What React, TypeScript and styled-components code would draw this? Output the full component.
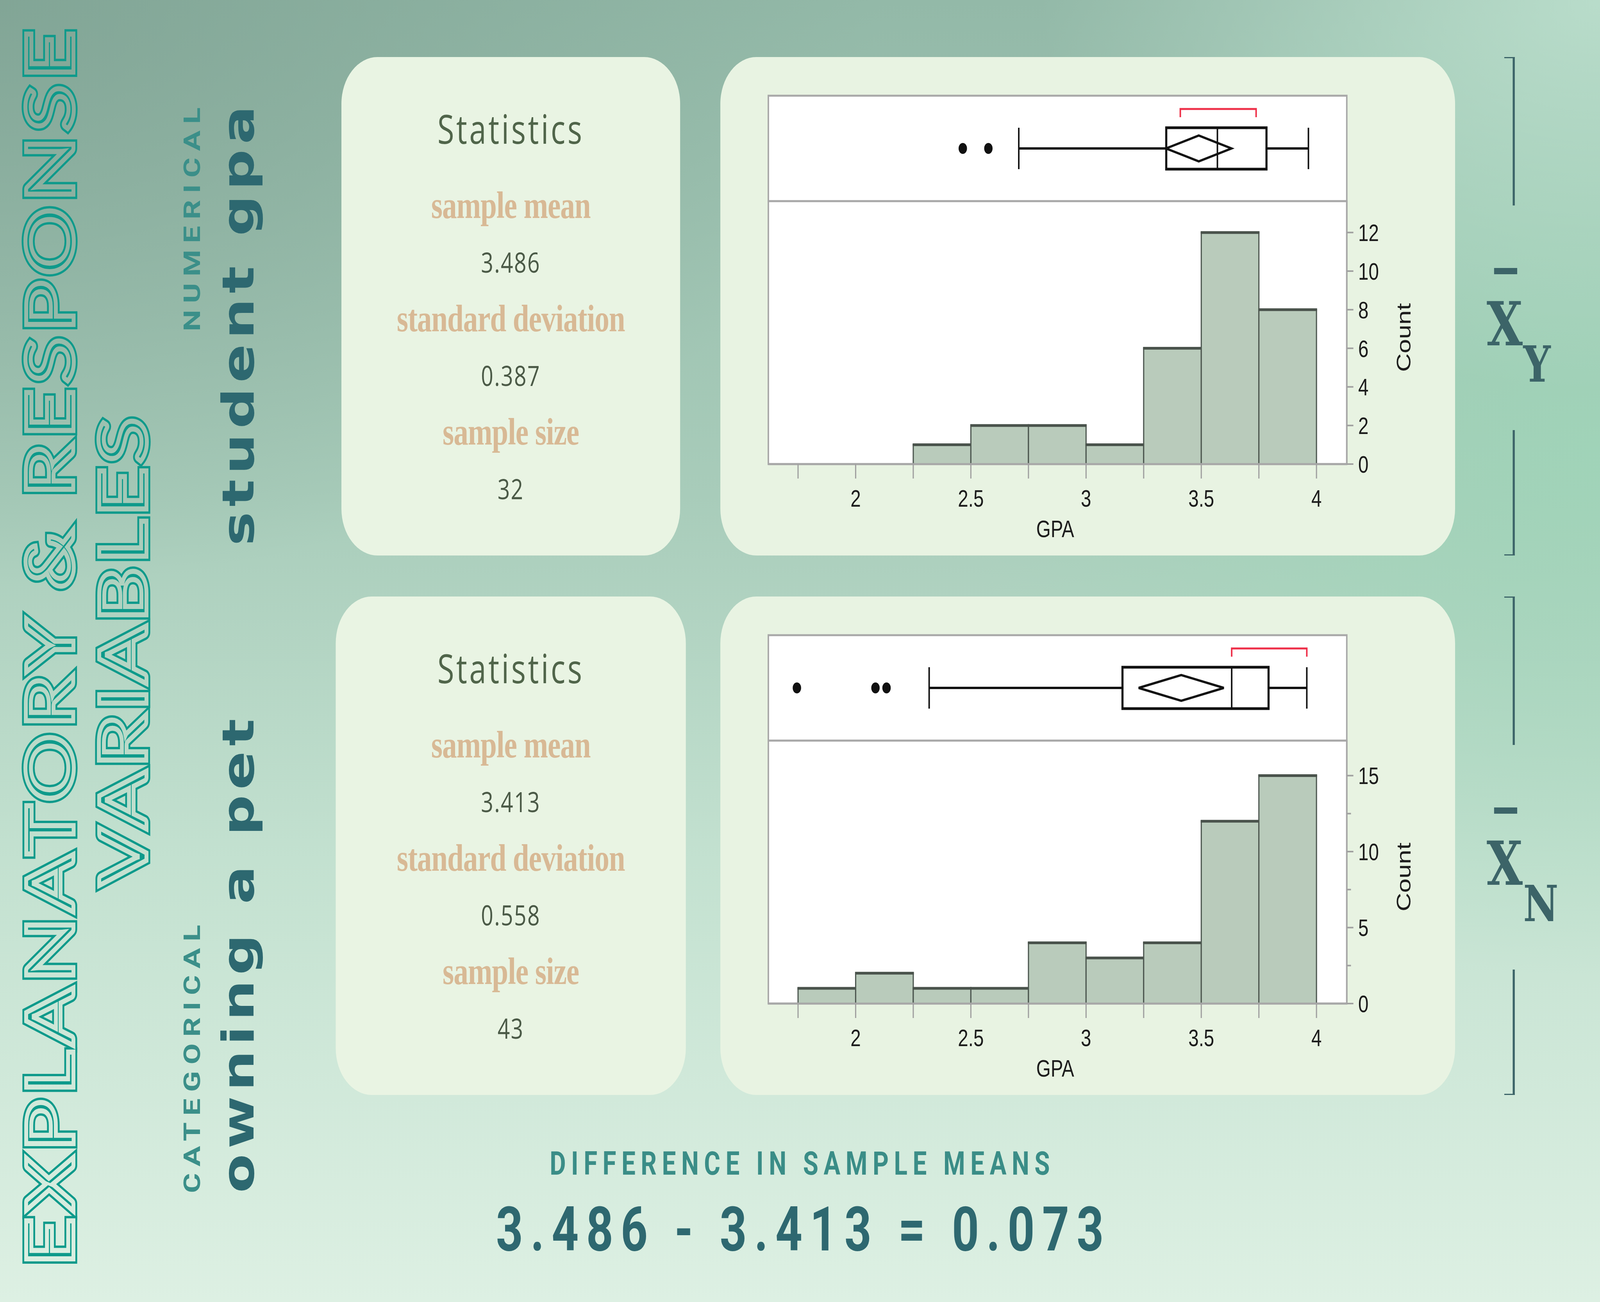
import React, { useEffect, useState } from "react";
import styled, { createGlobalStyle } from "styled-components";

const DESIGN_W = 5333;
const DESIGN_H = 3333;

const GlobalStyle = createGlobalStyle`
  html, body { margin: 0; padding: 0; overflow: hidden; }
  body { background: #c4e1d1; }
`;

/* the window is measured while the page runs and the 5333×3333 design is fitted to it */
function useViewportScale() {
  const read = () => ({
    sx: window.innerWidth / DESIGN_W,
    sy: window.innerHeight / DESIGN_H,
  });
  const [scale, setScale] = useState(read);
  useEffect(() => {
    const onResize = () => setScale(read());
    window.addEventListener("resize", onResize);
    return () => window.removeEventListener("resize", onResize);
  }, []);
  return scale;
}

const Viewport = styled.div`
  width: 100vw;
  height: 100vh;
  overflow: hidden;
`;

const Page = styled.main`
  width: ${DESIGN_W}px;
  height: ${DESIGN_H}px;
  transform-origin: 0 0;
  display: flex;
  overflow: hidden;
  font-family: "Open Sans", sans-serif;
  background:
    radial-gradient(ellipse 55% 45% at 0% 0%, rgba(118, 152, 138, 0.6), rgba(118, 152, 138, 0) 100%),
    radial-gradient(ellipse 35% 30% at 100% 0%, rgba(200, 234, 216, 0.7), rgba(200, 234, 216, 0) 100%),
    radial-gradient(ellipse 40% 40% at 100% 35%, rgba(158, 214, 184, 0.75), rgba(158, 214, 184, 0) 100%),
    linear-gradient(180deg, #93b9a8 0%, #a8ccba 38%, #c3e1d0 66%, #ddf0e3 100%);
`;

/* ---------- left rail ---------- */

const LeftRail = styled.aside`
  width: 1119px;
  flex: none;
  height: 100%;
  display: flex;
`;

const TitleArt = styled.svg`
  display: block;
  width: 560px;
  height: 3333px;
  flex: none;
`;

const VarLabels = styled.div`
  flex: 1;
  display: flex;
  flex-direction: column;
  justify-content: space-between;
  align-items: flex-start;
  box-sizing: border-box;
  padding: 258px 0 279px 41px;
`;

const VarGroup = styled.div<{ $align: "start" | "end" }>`
  writing-mode: vertical-rl;
  text-orientation: sideways;
  transform: rotate(180deg);
  height: 1300px;
  text-align: ${({ $align }) => $align};
`;

const VarKind = styled.div`
  font-family: Roboto, "Liberation Sans", sans-serif;
  font-weight: 700;
  font-size: 78px;
  line-height: 80px;
  letter-spacing: 17px;
  color: #3b8f89;
`;

const VarName = styled.div`
  font-family: "DejaVu Sans", sans-serif;
  font-weight: 700;
  font-size: 146px;
  line-height: 150px;
  letter-spacing: 13px;
  color: #2d6870;
  margin-block-start: 38px;
`;

/* ---------- main area ---------- */

const Main = styled.div`
  flex: 1;
  display: flex;
  flex-direction: column;
  box-sizing: border-box;
  padding-top: 146px;
`;

const Row = styled.section<{ $offset: number }>`
  display: flex;
  height: 1276px;
  flex: none;
  margin-top: ${({ $offset }) => $offset}px;
`;

const StatSlot = styled.div`
  width: 1167px;
  flex: none;
  display: flex;
  justify-content: center;
  margin-right: 115px;
`;

const StatsCard = styled.div<{ $width: number }>`
  width: ${({ $width }) => $width}px;
  height: 100%;
  box-sizing: border-box;
  background: #e9f4e3;
  border-radius: 120px;
  display: flex;
  flex-direction: column;
  align-items: center;
  padding-top: 110px;
`;

const StatsTitle = styled.div`
  font-family: "Open Sans", sans-serif;
  font-weight: 400;
  font-size: 102px;
  line-height: 146px;
  letter-spacing: 7px;
  color: #50654a;
  margin-bottom: 51px;
`;

const StatLabel = styled.div`
  font-family: "Liberation Serif", serif;
  font-weight: 700;
  font-size: 98px;
  line-height: 145px;
  letter-spacing: -1.5px;
  color: #d8b995;
`;

const StatValue = styled.div`
  font-family: "Open Sans", sans-serif;
  font-weight: 400;
  font-size: 72px;
  line-height: 145px;
  letter-spacing: 3px;
  color: #4b5a47;
`;

const ChartCard = styled.div`
  width: 2449px;
  flex: none;
  height: 100%;
  border-radius: 120px;
  background: #e8f3e2;
  overflow: hidden;
`;

const ChartSvg = styled.svg`
  display: block;
  width: 2449px;
  height: 1276px;
`;

const RightCol = styled.div`
  width: 334px;
  flex: none;
  display: flex;
  flex-direction: column;
`;

const BracketSeg = styled.div<{ $edge: "top" | "bottom"; $h: number }>`
  width: 35px;
  height: ${({ $h }) => $h}px;
  flex: none;
  margin-left: 164px;
  box-sizing: border-box;
  border-right: 7px solid #3c6468;
  border-${({ $edge }) => $edge}: 3px solid #3c6468;
`;

const MeanLabel = styled.div`
  flex: 1;
  display: flex;
  align-items: center;
  box-sizing: border-box;
  padding: 120px 0 0 105px;
  color: #3c6468;
  font-family: "DejaVu Serif", serif;
  font-weight: 700;
`;

const MeanSymbol = styled.div`
  display: flex;
  align-items: flex-start;
`;

const XBar = styled.span`
  position: relative;
  display: block;
  font-size: 155px;
  line-height: 1;
  &::before {
    content: "";
    position: absolute;
    left: 25px;
    top: -66px;
    width: 77px;
    height: 16px;
    background: #3c6468;
  }
`;

const MeanSub = styled.span`
  display: block;
  font-size: 128px;
  line-height: 1;
  margin: 116px 0 0 2px;
`;

const Footer = styled.footer`
  display: flex;
  flex-direction: column;
  align-items: center;
  padding-right: 1120px;
  margin-top: 134px;
`;

const DiffLabel = styled.div`
  font-family: Roboto, "Liberation Sans", sans-serif;
  font-weight: 700;
  font-size: 83px;
  line-height: 1;
  letter-spacing: 17.5px;
  padding-left: 17px;
  color: #3a8d87;
`;

const DiffValue = styled.div`
  font-family: Roboto, "Liberation Sans", sans-serif;
  font-weight: 700;
  font-size: 157px;
  line-height: 1;
  letter-spacing: 25px;
  padding-left: 25px;
  color: #2e6870;
  margin-top: 49px;
`;

/* ---------- title drawing ---------- */

const TITLE_COLOR = "#0e9a8b";
const titleLines = [
  { text: "EXPLANATORY & RESPONSE", center: 1660, baseline: 245, length: 3165 },
  { text: "VARIABLES", center: 1668, baseline: 488, length: 1199 },
];

function TitleLines() {
  return (
    <>
      {titleLines.map((l) => (
        <text
          key={l.text}
          x={-l.center}
          y={l.baseline}
          textLength={l.length}
          lengthAdjust="spacing"
          textAnchor="middle"
          fontFamily="Lato, 'Open Sans', sans-serif"
          fontSize={220}
        >
          {l.text}
        </text>
      ))}
    </>
  );
}

function Title() {
  return (
    <TitleArt viewBox="0 0 560 3333">
      <defs>
        <mask id="inline-cut" maskUnits="userSpaceOnUse" x="0" y="0" width="560" height="3333">
          <rect width="560" height="3333" fill="#fff" />
          <g transform="rotate(-90)" fill="none" stroke="#000" strokeWidth={13} strokeLinejoin="miter">
            <TitleLines />
          </g>
        </mask>
      </defs>
      <g mask="url(#inline-cut)">
        <g transform="rotate(-90)" fill={TITLE_COLOR} stroke={TITLE_COLOR} strokeWidth={25} strokeLinejoin="miter">
          <TitleLines />
        </g>
      </g>
    </TitleArt>
  );
}

/* ---------- chart drawing ---------- */

type BoxStats = {
  outliers: number[];
  lo: number;
  q1: number;
  med: number;
  q3: number;
  hi: number;
  mean: number;
  ci: number;
  short: [number, number];
};

type ChartProps = {
  bars: [number, number][];
  unit: number;
  labels: number[];
  minor: number[];
  box: BoxStats;
};

const FRAME_L = 160;
const FRAME_R = 2088;
const BOX_TOP = 99;
const DIVIDER = 369;
const AXIS = 1042;
const BOX_Y = 234;
const BOX_T = 181;
const BOX_B = 287;
const DIAMOND_H = 33;
const xOf = (v: number) => 451 + (v - 2) * 768;
const AXIS_GREY = "#a8a8a8";
const INK = "#111";
const LABEL_FONT = "'Liberation Sans', Arial, sans-serif";

function Chart({ bars, unit, labels, minor, box }: ChartProps) {
  const yOf = (c: number) => AXIS - c * unit;
  const xTicks: number[] = [];
  for (let v = 1.75; v <= 4.001; v += 0.25) xTicks.push(v);
  const xLabels = [2, 2.5, 3, 3.5, 4];
  const dl = xOf(box.mean - box.ci);
  const dr = xOf(box.mean + box.ci);
  const dc = xOf(box.mean);
  return (
    <ChartSvg viewBox="0 0 2449 1276">
      <rect x={FRAME_L} y={BOX_TOP} width={FRAME_R - FRAME_L} height={DIVIDER - BOX_TOP} fill="#fff" stroke={AXIS_GREY} strokeWidth={5} />
      <rect x={FRAME_L} y={DIVIDER} width={FRAME_R - FRAME_L} height={AXIS - DIVIDER} fill="#fff" stroke={AXIS_GREY} strokeWidth={5} />

      {/* box plot */}
      <path
        d={`M${xOf(box.short[0])} ${BOX_T - 27} V${BOX_T - 48} H${xOf(box.short[1])} V${BOX_T - 27}`}
        fill="none"
        stroke="#ee2f48"
        strokeWidth={5}
      />
      {box.outliers.map((o) => (
        <circle key={o} cx={xOf(o)} cy={BOX_Y} r={14} fill={INK} />
      ))}
      <line x1={xOf(box.lo)} x2={xOf(box.q1)} y1={BOX_Y} y2={BOX_Y} stroke={INK} strokeWidth={6} />
      <line x1={xOf(box.q3)} x2={xOf(box.hi)} y1={BOX_Y} y2={BOX_Y} stroke={INK} strokeWidth={6} />
      <line x1={xOf(box.lo)} x2={xOf(box.lo)} y1={BOX_T} y2={BOX_B} stroke={INK} strokeWidth={5} />
      <line x1={xOf(box.hi)} x2={xOf(box.hi)} y1={BOX_T} y2={BOX_B} stroke={INK} strokeWidth={5} />
      <rect x={xOf(box.q1)} y={BOX_T} width={xOf(box.q3) - xOf(box.q1)} height={BOX_B - BOX_T} fill="none" stroke={INK} strokeWidth={7} />
      <line x1={xOf(box.med)} x2={xOf(box.med)} y1={BOX_T} y2={BOX_B} stroke={INK} strokeWidth={5} />
      <polygon
        points={`${dl},${BOX_Y} ${dc},${BOX_Y - DIAMOND_H} ${dr},${BOX_Y} ${dc},${BOX_Y + DIAMOND_H}`}
        fill="none"
        stroke={INK}
        strokeWidth={6}
        strokeLinejoin="miter"
      />

      {/* histogram */}
      {bars.map(([from, count]) => {
        const x0 = xOf(from);
        const x1 = xOf(from + 0.25);
        const y = yOf(count);
        return (
          <g key={from}>
            <rect x={x0} y={y} width={x1 - x0} height={AXIS - y} fill="#b9cbbb" stroke="#4e5851" strokeWidth={4} />
            <line x1={x0 - 2} x2={x1 + 2} y1={y} y2={y} stroke="#4a534c" strokeWidth={7} />
          </g>
        );
      })}
      <line x1={FRAME_L} x2={FRAME_R} y1={AXIS} y2={AXIS} stroke={AXIS_GREY} strokeWidth={5} />
      <line x1={FRAME_R} x2={FRAME_R} y1={DIVIDER} y2={AXIS} stroke={AXIS_GREY} strokeWidth={5} />

      {xTicks.map((v) => (
        <line key={v} x1={xOf(v)} x2={xOf(v)} y1={AXIS} y2={AXIS + 37} stroke="#a0a0a0" strokeWidth={4} />
      ))}
      {xLabels.map((v) => (
        <text key={v} x={xOf(v)} y={1151} textAnchor="middle" fontFamily={LABEL_FONT} fontSize={62} fill="#1c1c1c">
          {v}
        </text>
      ))}
      <text x={1116} y={1229} textAnchor="middle" fontFamily={LABEL_FONT} fontSize={62} fill="#1c1c1c">
        GPA
      </text>

      {labels.map((c) => (
        <g key={c}>
          <line x1={FRAME_R} x2={FRAME_R + 22} y1={yOf(c)} y2={yOf(c)} stroke="#a0a0a0" strokeWidth={4} />
          <text x={FRAME_R + 38} y={yOf(c) + 22} fontFamily={LABEL_FONT} fontSize={62} fill="#1c1c1c">
            {c}
          </text>
        </g>
      ))}
      {minor.map((c) => (
        <line key={c} x1={FRAME_R} x2={FRAME_R + 14} y1={yOf(c)} y2={yOf(c)} stroke="#a0a0a0" strokeWidth={4} />
      ))}
      <text
        transform="translate(2300 718) rotate(-90)"
        textAnchor="middle"
        fontFamily={LABEL_FONT}
        fontSize={66}
        fill="#1c1c1c"
      >
        Count
      </text>
    </ChartSvg>
  );
}

/* ---------- data ---------- */

type Variable = {
  kind: string;
  name: string;
  align: "start" | "end";
};

const variables: Variable[] = [
  { kind: "NUMERICAL", name: "student gpa", align: "end" },
  { kind: "CATEGORICAL", name: "owning a pet", align: "start" },
];

type Group = {
  mean: string;
  sd: string;
  n: string;
  cardWidth: number;
  sub: string;
  chart: ChartProps;
};

const groups: Group[] = [
  {
    mean: "3.486",
    sd: "0.387",
    n: "32",
    cardWidth: 1129,
    sub: "Y",
    chart: {
      bars: [
        [2.25, 1],
        [2.5, 2],
        [2.75, 2],
        [3, 1],
        [3.25, 6],
        [3.5, 12],
        [3.75, 8],
      ],
      unit: 49.4,
      labels: [0, 2, 4, 6, 8, 10, 12],
      minor: [],
      box: {
        outliers: [2.465, 2.576],
        lo: 2.708,
        q1: 3.348,
        med: 3.57,
        q3: 3.783,
        hi: 3.965,
        mean: 3.489,
        ci: 0.142,
        short: [3.409, 3.738],
      },
    },
  },
  {
    mean: "3.413",
    sd: "0.558",
    n: "43",
    cardWidth: 1167,
    sub: "N",
    chart: {
      bars: [
        [1.75, 1],
        [2, 2],
        [2.25, 1],
        [2.5, 1],
        [2.75, 4],
        [3, 3],
        [3.25, 4],
        [3.5, 12],
        [3.75, 15],
      ],
      unit: 38.9,
      labels: [0, 5, 10, 15],
      minor: [2.5, 7.5, 12.5],
      box: {
        outliers: [1.745, 2.086, 2.134],
        lo: 2.319,
        q1: 3.158,
        med: 3.632,
        q3: 3.792,
        hi: 3.958,
        mean: 3.413,
        ci: 0.185,
        short: [3.632, 3.958],
      },
    },
  },
];

export default function App() {
  const { sx, sy } = useViewportScale();
  return (
    <>
      <GlobalStyle />
      <Viewport>
        <Page style={{ transform: `scale(${sx}, ${sy})` }}>
          <LeftRail>
            <Title />
            <VarLabels>
              {variables.map((v) => (
                <VarGroup key={v.kind} $align={v.align}>
                  <VarKind>{v.kind}</VarKind>
                  <VarName>{v.name}</VarName>
                </VarGroup>
              ))}
            </VarLabels>
          </LeftRail>
          <Main>
            {groups.map((g, i) => (
              <Row key={g.sub} $offset={i === 0 ? 0 : 105}>
                <StatSlot>
                  <StatsCard $width={g.cardWidth}>
                    <StatsTitle>Statistics</StatsTitle>
                    <StatLabel>sample mean</StatLabel>
                    <StatValue>{g.mean}</StatValue>
                    <StatLabel>standard deviation</StatLabel>
                    <StatValue>{g.sd}</StatValue>
                    <StatLabel>sample size</StatLabel>
                    <StatValue>{g.n}</StatValue>
                  </StatsCard>
                </StatSlot>
                <ChartCard>
                  <Chart {...g.chart} />
                </ChartCard>
                <RightCol>
                  <BracketSeg $edge="top" $h={380} />
                  <MeanLabel>
                    <MeanSymbol>
                      <XBar>X</XBar>
                      <MeanSub>{g.sub}</MeanSub>
                    </MeanSymbol>
                  </MeanLabel>
                  <BracketSeg $edge="bottom" $h={321} />
                </RightCol>
              </Row>
            ))}
            <Footer>
              <DiffLabel>DIFFERENCE IN SAMPLE MEANS</DiffLabel>
              <DiffValue>3.486 - 3.413 = 0.073</DiffValue>
            </Footer>
          </Main>
        </Page>
      </Viewport>
    </>
  );
}
